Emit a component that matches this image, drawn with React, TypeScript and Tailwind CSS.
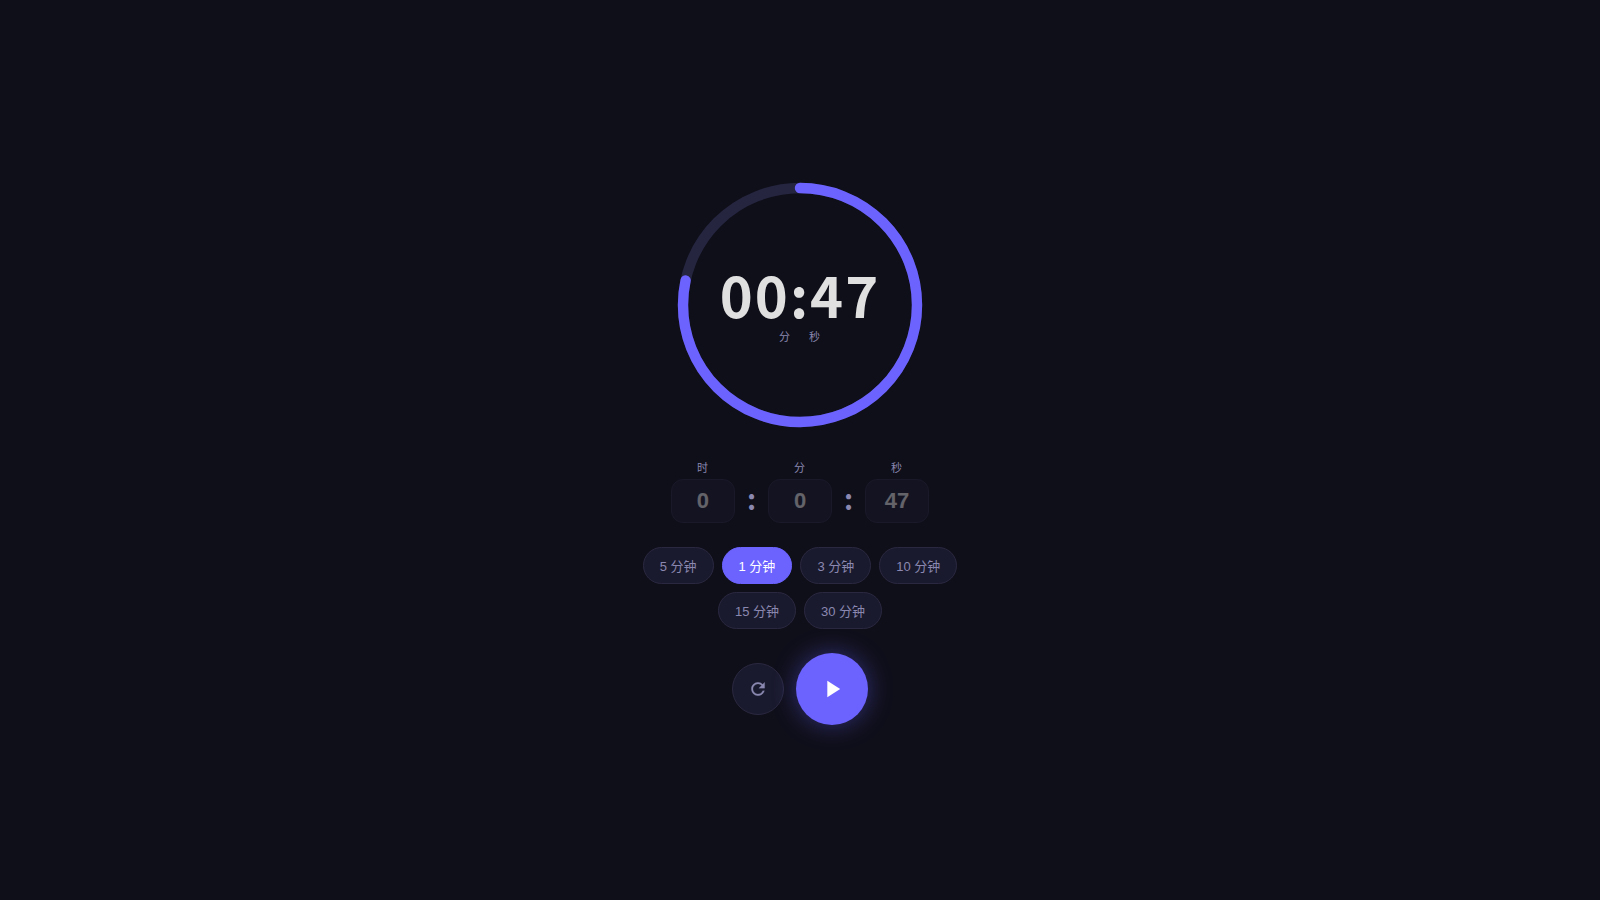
import React, { useEffect, useState } from 'react';
import { MdPause, MdPlayArrow } from 'react-icons/md';

type TimeFieldProps = {
    id: string;
    label: string;
    value: number;
    max: number;
    disabled: boolean;
    onChange: (value: number) => void;
};

const PRESETS = [5, 1, 3, 10, 15, 30];
const RADIUS = 90;
const CIRCUMFERENCE = 2 * Math.PI * RADIUS;

const pad = (n: number) => String(n).padStart(2, '0');

const formatTime = (total: number) => {
    const h = Math.floor(total / 3600);
    const rest = `${pad(Math.floor((total % 3600) / 60))}:${pad(total % 60)}`;
    return h > 0 ? `${pad(h)}:${rest}` : rest;
};

const ResetIcon = () => (
    <svg viewBox="0 0 24 24" className="size-5" fill="currentColor" stroke="currentColor" strokeWidth="0.25" aria-hidden="true">
        <path d="M17.65 6.35C16.2 4.9 14.21 4 12 4c-4.42 0-7.99 3.58-7.99 8s3.57 8 7.99 8c3.73 0 6.84-2.55 7.73-6h-2.08c-.82 2.33-3.04 4-5.65 4-3.31 0-6-2.69-6-6s2.69-6 6-6c1.66 0 3.14.69 4.22 1.78L13 11h7V4l-2.35 2.35z" />
    </svg>
);

const TimeField: React.FC<TimeFieldProps> = ({ id, label, value, max, disabled, onChange }) => (
    <div className="flex flex-col items-center gap-1">
        <label htmlFor={id} className="text-[11px] leading-[normal] tracking-[1px] text-[#8a88b0]">{label}</label>
        <input
            id={id}
            type="text"
            inputMode="numeric"
            value={value}
            disabled={disabled}
            onChange={(e) => onChange(Math.min(max, Number(e.target.value) || 0))}
            className="h-11 w-16 rounded-xl border border-[#2a2840] bg-[#1a1a2e] text-center text-[22px] font-bold text-[#e0e0e0] outline-none focus:border-[#6c63ff] disabled:opacity-40"
        />
    </div>
);

const Separator = () => (
    <span className="pb-[5px] font-['Noto_Sans_CJK_SC',sans-serif] text-[28px] leading-[normal] font-bold text-[#8a88b0]">:</span>
);

const ProgressRing: React.FC<{ remaining: number; total: number }> = ({ remaining, total }) => {
    const ratio = total > 0 ? remaining / total : 0;

    return (
        <div className="grid size-[260px] place-items-center">
            <svg viewBox="0 0 200 200" className="col-start-1 row-start-1 size-full -rotate-90" aria-hidden="true">
                <circle cx="100" cy="100" r={RADIUS} fill="none" stroke="#252540" strokeWidth="8" />
                <circle
                    cx="100"
                    cy="100"
                    r={RADIUS}
                    fill="none"
                    stroke="#6c63ff"
                    strokeWidth="8"
                    strokeLinecap="round"
                    strokeDasharray={CIRCUMFERENCE}
                    strokeDashoffset={CIRCUMFERENCE * (1 - ratio)}
                />
            </svg>
            <div className="col-start-1 row-start-1 flex flex-col items-center gap-1.5">
                <div className="font-['Noto_Sans_CJK_SC',sans-serif] text-[56px] leading-[56px] font-bold tracking-[2px] text-[#e0e0e0]">
                    {formatTime(remaining)}
                </div>
                <div className="flex gap-[18px] text-[11px] leading-[normal] tracking-[1px] text-[#8a88b0]">
                    <span>分</span>
                    <span>秒</span>
                </div>
            </div>
        </div>
    );
};

const App: React.FC = () => {
    const [preset, setPreset] = useState(1);
    const [total, setTotal] = useState(60);
    const [remaining, setRemaining] = useState(47);
    const [running, setRunning] = useState(false);

    useEffect(() => {
        if (!running) return;
        const timer = setInterval(() => setRemaining((r) => Math.max(0, r - 1)), 1000);
        return () => clearInterval(timer);
    }, [running]);

    useEffect(() => {
        if (remaining === 0) setRunning(false);
    }, [remaining]);

    const hours = Math.floor(remaining / 3600);
    const minutes = Math.floor((remaining % 3600) / 60);
    const seconds = remaining % 60;
    // the fields can only be edited before the countdown has started
    const locked = running || remaining !== total;

    const setTime = (value: number) => {
        setTotal(value);
        setRemaining(value);
    };

    const choosePreset = (value: number) => {
        setPreset(value);
        setRunning(false);
        setTime(value * 60);
    };

    const reset = () => {
        setRunning(false);
        setRemaining(total);
    };

    return (
        <main
            lang="zh-CN"
            className="flex min-h-screen flex-col items-center justify-center gap-6 bg-[#0f0f1a] font-['Liberation_Sans','Noto_Sans_CJK_SC',sans-serif]"
        >
            <ProgressRing remaining={remaining} total={total} />

            <div className="flex items-end gap-3">
                <TimeField id="hours" label="时" value={hours} max={99} disabled={locked}
                    onChange={(v) => setTime(v * 3600 + minutes * 60 + seconds)} />
                <Separator />
                <TimeField id="minutes" label="分" value={minutes} max={59} disabled={locked}
                    onChange={(v) => setTime(hours * 3600 + v * 60 + seconds)} />
                <Separator />
                <TimeField id="seconds" label="秒" value={seconds} max={59} disabled={locked}
                    onChange={(v) => setTime(hours * 3600 + minutes * 60 + v)} />
            </div>

            <div className="flex max-w-xs flex-wrap justify-center gap-2">
                {PRESETS.map((p) => (
                    <button
                        key={p}
                        type="button"
                        onClick={() => choosePreset(p)}
                        className={`rounded-full border px-4 py-2 text-[13px] leading-[normal] ${
                            p === preset
                                ? 'border-[#6c63ff] bg-[#6c63ff] text-white'
                                : 'border-[#2a2840] bg-[#1a1a2e] text-[#8a88b0]'
                        }`}
                    >
                        {p} 分钟
                    </button>
                ))}
            </div>

            <div className="flex items-center gap-3">
                <button
                    type="button"
                    aria-label="重置"
                    onClick={reset}
                    className="flex size-[52px] items-center justify-center rounded-full border border-[#2a2840] bg-[#1a1a2e] text-[#8a88b0]"
                >
                    <ResetIcon />
                </button>
                <button
                    type="button"
                    aria-label={running ? '暂停' : '开始'}
                    onClick={() => setRunning(!running)}
                    className="flex size-[72px] items-center justify-center rounded-full bg-[#6c63ff] text-white shadow-[0_0_24px_rgba(108,99,255,0.4)]"
                >
                    {running ? <MdPause size={28} /> : <MdPlayArrow size={28} />}
                </button>
            </div>
        </main>
    );
};

export default App;
